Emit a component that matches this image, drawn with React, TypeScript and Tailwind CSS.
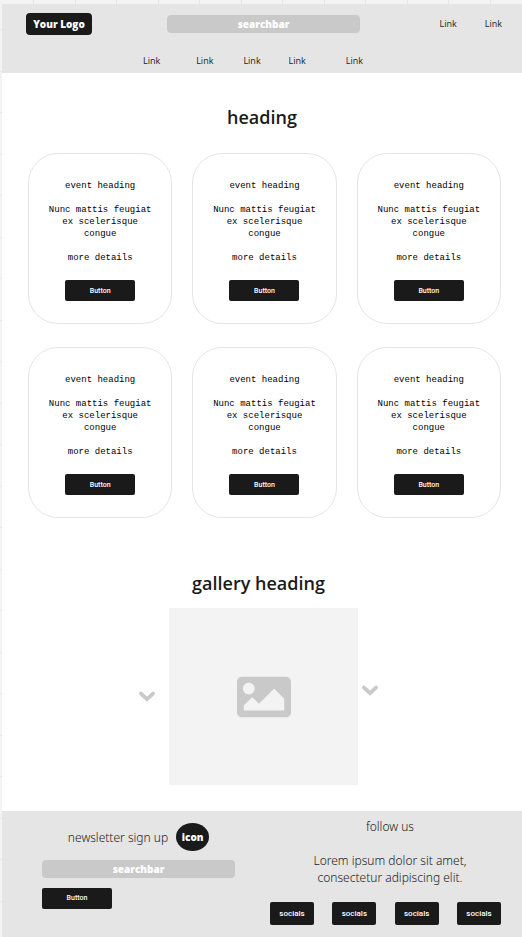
import { FaImage } from "react-icons/fa";

const topLinks = ["Link", "Link"];
const navLinks = [
  { label: "Link", space: "" },
  { label: "Link", space: "ml-9" },
  { label: "Link", space: "ml-[30px]" },
  { label: "Link", space: "ml-7" },
  { label: "Link", space: "ml-10" },
];
const events = [1, 2, 3, 4, 5, 6];
const socials = [1, 2, 3, 4];

function SearchBar({ label }: { label: string }) {
  return (
    <input
      type="text"
      aria-label={label}
      placeholder="searchbar"
      className="block h-[18px] w-[193px] rounded bg-[#c9c9c9] text-center text-[10px] font-extrabold text-white placeholder:text-white outline-none"
    />
  );
}

function DarkButton() {
  return (
    <button
      type="button"
      className="block h-[21px] w-[70px] rounded-xs bg-[#1a1a1a] font-['Roboto',sans-serif] text-[7px] font-medium text-white"
    >
      Button
    </button>
  );
}

function Chevron() {
  return (
    <svg viewBox="0 0 16 11" className="h-[11px] w-4" fill="none" aria-hidden="true">
      <path
        d="M2 2.6 8 8.2 14 2.6"
        stroke="currentColor"
        strokeWidth="3.8"
        strokeLinecap="round"
        strokeLinejoin="miter"
      />
    </svg>
  );
}

function EventCard() {
  return (
    <article className="flex h-[171px] flex-col items-center rounded-[30px] border border-[#e5e5e5] px-4 pt-[26px] text-center font-['Liberation_Mono',monospace] text-[9px] leading-3 text-black">
      <h2>event heading</h2>
      <p className="mt-3">Nunc mattis feugiat ex scelerisque congue</p>
      <p className="mt-3 mb-4">more details</p>
      <DarkButton />
    </article>
  );
}

export default function App() {
  return (
    <div className="bg-[#f3f3f3] bg-[repeating-linear-gradient(to_right,transparent_0_33px,#e6e6e6_33px_34px,transparent_34px_75px,#e6e6e6_75px_76px,transparent_76px_83px),repeating-linear-gradient(to_bottom,transparent_0_29px,#e9e9e9_29px_30px,transparent_30px_71px,#e9e9e9_71px_72px,transparent_72px_83px)] pt-1 pl-0.5 font-['Open_Sans',sans-serif] text-[#1a1a1a]">
      <header className="bg-[#e5e5e5] pt-[9px] pr-5 pb-1.5 pl-6">
        <div className="flex items-center">
          <a
            href="#"
            className="flex h-[22px] w-[66px] items-center justify-center rounded bg-[#1a1a1a] text-[10px] font-extrabold whitespace-nowrap text-white"
          >
            Your Logo
          </a>
          <div className="ml-[75px]">
            <SearchBar label="Search" />
          </div>
          <div className="ml-auto flex gap-7 text-[9px]">
            {topLinks.map((label, i) => (
              <a key={i} href="#">
                {label}
              </a>
            ))}
          </div>
        </div>
        <nav className="mt-5 flex justify-center pr-[22px] text-[9px] leading-3">
          {navLinks.map((link, i) => (
            <a key={i} href="#" className={link.space}>
              {link.label}
            </a>
          ))}
        </nav>
      </header>

      <main className="bg-white">
        <section className="pt-[30px]">
          <h1 className="text-center text-lg leading-7 font-semibold">heading</h1>
          <div className="mt-[22px] grid grid-cols-3 gap-x-5 gap-y-[23px] pr-[21px] pl-[26px]">
            {events.map((id) => (
              <EventCard key={id} />
            ))}
          </div>
        </section>

        <section className="pt-[51px] pr-[7px] pb-[26px]">
          <h2 className="text-center text-lg leading-7 font-semibold">gallery heading</h2>
          <div className="mt-[11px] flex items-center justify-center text-[#c9c9c9]">
            <button type="button" aria-label="Previous picture" className="mr-3.5">
              <Chevron />
            </button>
            <div className="flex h-[177px] w-[189px] items-center justify-center bg-[#f3f3f3]">
              <FaImage size={54} />
            </div>
            <button type="button" aria-label="Next picture" className="mb-3 ml-1">
              <Chevron />
            </button>
          </div>
        </section>
      </main>

      <footer className="flex justify-between bg-[#e5e5e5] pr-[21px] pb-3 pl-10 font-['Noto_Sans',sans-serif] text-xs leading-[17px] font-light">
        <div className="pt-3">
          <div className="flex items-center justify-center gap-2">
            <p>newsletter sign up</p>
            <span className="flex h-7 w-[33px] items-center justify-center rounded-[50%] bg-[#1a1a1a] font-['Open_Sans',sans-serif] text-[10px] font-extrabold text-white">
              icon
            </span>
          </div>
          <div className="mt-[9px] mb-2.5 font-['Open_Sans',sans-serif]">
            <SearchBar label="Email address" />
          </div>
          <DarkButton />
        </div>
        <div className="w-[231px] pt-[7px]">
          <div className="pl-[9px] text-center">
            <p>follow us</p>
            <p className="mt-[17px]">
              Lorem ipsum dolor sit amet,
              <br />
              consectetur adipiscing elit.
            </p>
          </div>
          <div className="mt-4 flex justify-between">
            {socials.map((id) => (
              <button
                key={id}
                type="button"
                className="h-[23px] w-11 rounded-xs bg-[#1a1a1a] font-['Roboto',sans-serif] text-[8px] font-medium text-white"
              >
                socials
              </button>
            ))}
          </div>
        </div>
      </footer>
    </div>
  );
}
